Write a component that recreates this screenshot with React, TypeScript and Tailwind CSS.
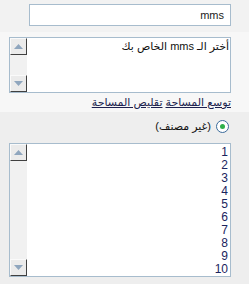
import React from 'react';

const NUMS = ['1', '2', '3', '4', '5', '6', '7', '8', '9', '10'];

function ScrollBtn({ dir }: { dir: 'up' | 'down' }) {
  return (
    <div className="flex h-[17px] w-[17px] items-center justify-center border border-t-[#fafafa] border-l-[#fafafa] border-r-[#404040] border-b-[#404040] bg-[#ebebeb]">
      <svg width="9" height="5" viewBox="0 0 9 5">
        {dir === 'up' ?
        <polygon points="0,5 4.5,0 9,5" fill="#8fa6be" /> :
        <polygon points="0,0 4.5,5 9,0" fill="#8fa6be" />}
      </svg>
    </div>);
}

function ScrollBar() {
  return (
    <div className="flex w-[17px] shrink-0 flex-col justify-between bg-[#f1f1f1]">
      <ScrollBtn dir="up" />
      <ScrollBtn dir="down" />
    </div>);
}

export default function App() {
  return (
    <div
      dir="rtl"
      className="h-[284px] w-[249px] overflow-hidden text-[11px] leading-[13px] text-[#1b1b3a]"
      style={{ fontFamily: '"Liberation Sans", "DejaVu Sans", sans-serif' }}>

      {/* name box */}
      <div className="h-[32px] bg-[#f2f2f2] pr-[18px] pt-[4px]">
        <div className="flex h-[22px] w-[202px] items-center border border-[#a7bccd] bg-white px-[6px] text-[#222]">
          mms
        </div>
      </div>

      {/* description */}
      <div className="h-[80px] bg-[#f7f7f7] pr-[18px] pt-[5px]">
        <div className="flex h-[56px] w-[222px] border border-[#a7bccd] bg-white">
          <div className="flex-1 px-[1px] pt-[2px] text-[#111]">أختر الـ mms الخاص بك</div>
          <ScrollBar />
        </div>
        <div className="mt-[3px] flex gap-[3px] text-[#1c1f4f]">
          <span className="underline">توسع المساحة</span>
          <span className="underline">تقليص المساحة</span>
        </div>
      </div>

      {/* category */}
      <div className="h-[172px] bg-[#eeeeee] pr-[20px] pt-[8px]">
        <div className="flex items-center gap-[5px]">
          <div className="flex h-[13px] w-[13px] items-center justify-center rounded-full border border-[#3a6a9a] bg-white">
            <div className="h-[5px] w-[5px] rounded-full bg-[#2fb04a]" />
          </div>
          <span className="text-[#111]">(غير مصنف)</span>
        </div>
        <div className="-mr-[2px] mt-[10px] flex h-[134px] w-[222px] border border-[#a7bccd] bg-white">
          <div className="flex-1 px-[2px] pt-[2px] text-[12px] text-[#1a245e]">
            {NUMS.map((n) =>
            <div key={n} className="h-[13px] leading-[13px]">{n}</div>
            )}
          </div>
          <ScrollBar />
        </div>
      </div>
    </div>);
}
